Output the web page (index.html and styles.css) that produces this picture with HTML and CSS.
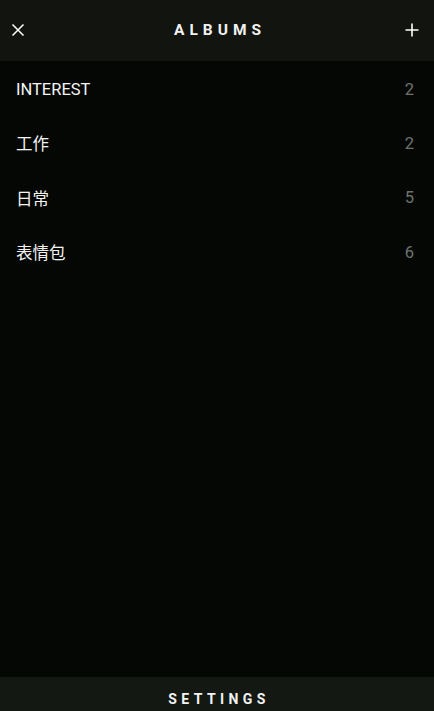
FILE: index.html
```html
<!DOCTYPE html>
<html lang="zh">

<head>
  <meta charset="UTF-8">
  <meta name="viewport" content="width=device-width, initial-scale=1.0">
  <title>Albums</title>
  <link rel="stylesheet" href="styles.css">
</head>

<body>
  <div class="page">
    <header class="topbar">
      <button class="icon-btn">
        <svg width="14" height="14" viewBox="0 0 14 14"><path d="M1.5 1.5 L12.5 12.5 M12.5 1.5 L1.5 12.5" stroke="#fff" stroke-width="1.5" /></svg>
      </button>
      <h1 class="title">ALBUMS</h1>
      <button class="icon-btn">
        <svg width="14" height="14" viewBox="0 0 14 14"><path d="M7 0.5 V13.5 M0.5 7 H13.5" stroke="#fff" stroke-width="1.6" /></svg>
      </button>
    </header>

    <ul class="albums">
      <li class="album"><span class="name">INTEREST</span><span class="count">2</span></li>
      <li class="album"><span class="name">工作</span><span class="count">2</span></li>
      <li class="album"><span class="name">日常</span><span class="count">5</span></li>
      <li class="album"><span class="name">表情包</span><span class="count">6</span></li>
    </ul>

    <footer class="bottombar">SETTINGS</footer>
  </div>
</body>

</html>
```

FILE: styles.css
```css
html,
body {
  margin: 0;
  height: 100%;
}

body {
  background: #040704;
  color: #fff;
  font-family: Roboto, "Noto Sans CJK SC", sans-serif;
}

.page {
  display: flex;
  flex-direction: column;
  height: 100vh;
}

/* 顶部栏 */
.topbar {
  display: flex;
  align-items: center;
  justify-content: space-between;
  height: 61px;
  padding: 0 9px 1px 5px;
  box-sizing: border-box;
  background: #11140f;
}

.icon-btn {
  display: flex;
  align-items: center;
  justify-content: center;
  width: 26px;
  height: 26px;
  padding: 0;
  background: none;
  border: none;
}

.title {
  margin: 0 0 0 10px;
  font-size: 15.5px;
  font-weight: 700;
  letter-spacing: 5px;
  color: #f2f2f2;
}

/* 相册列表 */
.albums {
  flex: 1;
  margin: 0;
  padding: 1px 20px 0 16px;
  list-style: none;
}

.album {
  display: flex;
  align-items: center;
  justify-content: space-between;
  height: 54.3px;
  font-size: 16.5px;
}

.album .name {
  color: #f4f4f4;
}

.album .count {
  color: #6f7370;
}

/* 底部设置 */
.bottombar {
  height: 34px;
  padding: 14px 0 0 4px;
  box-sizing: border-box;
  text-align: center;
  font-size: 14px;
  font-weight: 700;
  letter-spacing: 4.4px;
  color: #f2f2f2;
  background: #141812;
}
```
